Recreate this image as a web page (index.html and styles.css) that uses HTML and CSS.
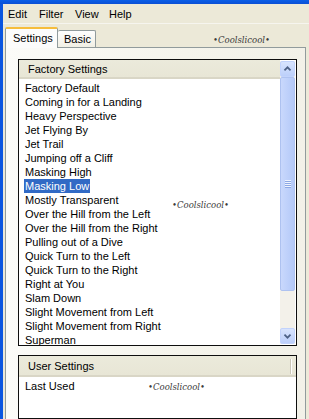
FILE: index.html
```html
<!DOCTYPE html>
<html>
<head>
<meta charset="utf-8">
<link rel="stylesheet" href="styles.css">
</head>
<body>
<div class="window">
  <div class="titlebar"></div>
  <div class="frame">
    <div class="menubar">
      <span class="menu m-edit">Edit</span>
      <span class="menu m-filter">Filter</span>
      <span class="menu m-view">View</span>
      <span class="menu m-help">Help</span>
    </div>
    <div class="tabs">
      <div class="tab active">Settings</div>
      <div class="tab">Basic</div>
    </div>
    <div class="panel">
      <div class="listbox factory">
        <div class="lb-main">
          <div class="lb-header">Factory Settings</div>
          <ul class="items">
            <li>Factory Default</li>
            <li>Coming in for a Landing</li>
            <li>Heavy Perspective</li>
            <li>Jet Flying By</li>
            <li>Jet Trail</li>
            <li>Jumping off a Cliff</li>
            <li>Masking High</li>
            <li><span class="sel">Masking Low</span></li>
            <li>Mostly Transparent</li>
            <li>Over the Hill from the Left</li>
            <li>Over the Hill from the Right</li>
            <li>Pulling out of a Dive</li>
            <li>Quick Turn to the Left</li>
            <li>Quick Turn to the Right</li>
            <li>Right at You</li>
            <li>Slam Down</li>
            <li>Slight Movement from Left</li>
            <li>Slight Movement from Right</li>
            <li>Superman</li>
          </ul>
        </div>
        <div class="scrollbar">
          <div class="sb-btn">
            <svg width="15" height="16" viewBox="0 0 15 16"><path d="M4 9.5 L7.5 6 L11 9.5" fill="none" stroke="#4d6185" stroke-width="2"/></svg>
          </div>
          <div class="sb-thumb">
            <div class="grip"></div>
            <div class="grip"></div>
            <div class="grip"></div>
            <div class="grip"></div>
          </div>
          <div class="sb-track"></div>
          <div class="sb-btn">
            <svg width="15" height="16" viewBox="0 0 15 16"><path d="M4 6.5 L7.5 10 L11 6.5" fill="none" stroke="#4d6185" stroke-width="2"/></svg>
          </div>
        </div>
      </div>
      <div class="listbox user">
        <div class="lb-main">
          <div class="lb-header user-header">User Settings<span class="hdr-sep"></span></div>
          <ul class="items">
            <li>Last Used</li>
          </ul>
        </div>
      </div>
    </div>
  </div>
  <span class="wm wm1">•Coolslicool•</span>
  <span class="wm wm2">•Coolslicool•</span>
  <span class="wm wm3">•Coolslicool•</span>
</div>
</body>
</html>
```
FILE: styles.css
```css
* { box-sizing: border-box; }
html, body {
  margin: 0;
  padding: 0;
  width: 309px;
  height: 419px;
  overflow: hidden;
  background: #ece9d8;
  font-family: Tahoma, "Liberation Sans", Arial, sans-serif;
  font-size: 11px;
  color: #000;
}
.window {
  position: relative;
  width: 309px;
  height: 419px;
  display: flex;
  flex-direction: column;
}
.titlebar {
  height: 4px;
  background: linear-gradient(#0a5fe8, #0b4fd4);
  flex: none;
}
.frame {
  flex: 1;
  border-left: 3px solid #0b56e0;
  background: #ece9d8;
  display: flex;
  flex-direction: column;
}
.menubar {
  height: 20px;
  display: flex;
  align-items: center;
  padding-left: 5px;
  flex: none;
  border-bottom: 1px solid #f6f5ef;
}
.menu { line-height: 20px; font-size: 11px; }
.m-edit { width: 31px; }
.m-filter { width: 36px; }
.m-view { width: 34px; }
.m-help { width: 30px; }
.tabs {
  margin-top: 3px;
  height: 20px;
  display: flex;
  align-items: flex-end;
  padding-left: 2px;
  flex: none;
  position: relative;
  z-index: 1;
}
.tab {
  height: 17px;
  line-height: 16px;
  font-size: 11px;
  background: linear-gradient(#fefefe, #f1efe4);
  border: 1px solid #919b9c;
  border-bottom: none;
  border-radius: 2px 2px 0 0;
}
.tab.active {
  width: 53px;
  padding: 0 0 0 7px;
  line-height: 18px;
  background: #fcfcfb;
  border-top: 2px solid #f6bd3c;
  border-left: 1px solid #919b9c;
  border-right: 1px solid #919b9c;
  margin-bottom: -1px;
  height: 21px;
}
.tab:not(.active) {
  width: 38px;
  padding-left: 6px;
  border-left: none;
}
.panel {
  flex: 1;
  margin-left: 2px;
  margin-right: 3px;
  border: 1px solid #919b9c;
  border-bottom: none;
  background: linear-gradient(90deg, #fbfbf8, #f5f4ec 60%, #f2f1e8);
  padding: 11px 8px 0 12px;
  display: flex;
  flex-direction: column;
  gap: 9px;
}
.listbox {
  border: 1px solid #0e0e0e;
  background: #fff;
  display: flex;
}
.factory { height: 287px; }
.user { flex: 1; }
.lb-main {
  flex: 1;
  overflow: hidden;
  display: flex;
  flex-direction: column;
}
.lb-header {
  height: 19px;
  flex: none;
  background: linear-gradient(#ebeadb, #e8e6d6);
  border-bottom: 2px solid #d9d6c6;
  padding-left: 9px;
  line-height: 18px;
  font-size: 11px;
  position: relative;
}
.user-header { height: 21px; line-height: 20px; }
.hdr-sep {
  position: absolute;
  right: 5px;
  top: 3px;
  width: 1px;
  height: 15px;
  background: #cbc7b8;
  box-shadow: 1px 0 0 #fff;
}
.items {
  list-style: none;
  margin: 0;
  padding: 2px 0 0 6px;
}
.items li {
  height: 14px;
  line-height: 14px;
  font-size: 11px;
  white-space: nowrap;
}
.sel {
  background: #316ac5;
  color: #fff;
  display: inline-block;
  padding: 0 1px;
  margin-left: -1px;
}
.scrollbar {
  width: 15px;
  flex: none;
  display: flex;
  flex-direction: column;
  background: #f3f1ea;
  margin: 1px 1px 1px 0;
}
.sb-btn {
  height: 16px;
  flex: none;
  background: linear-gradient(#d8e4fd, #bccffa);
  border: 1px solid #c2d3fc;
  border-radius: 2px;
  display: flex;
  align-items: center;
  justify-content: center;
}
.sb-btn svg { display: block; }
.sb-thumb {
  height: 214px;
  flex: none;
  background: linear-gradient(90deg, #c9d8fc, #bccffa 60%, #b5c9f7);
  border: 1px solid #aec2f0;
  border-radius: 2px;
  display: flex;
  flex-direction: column;
  align-items: center;
  justify-content: center;
}
.grip {
  width: 6px;
  height: 1px;
  background: #eef3fe;
  box-shadow: 0 1px 0 #8ca7e4;
  margin-bottom: 1px;
}
.sb-track { flex: 1; }
.wm {
  position: absolute;
  font-family: "DejaVu Serif", "Liberation Serif", serif;
  font-style: italic;
  font-size: 8.5px;
  color: #3a3a3a;
  white-space: nowrap;
}
.wm1 { left: 213px; top: 35px; }
.wm2 { left: 172px; top: 200px; }
.wm3 { left: 148px; top: 382px; }
```
